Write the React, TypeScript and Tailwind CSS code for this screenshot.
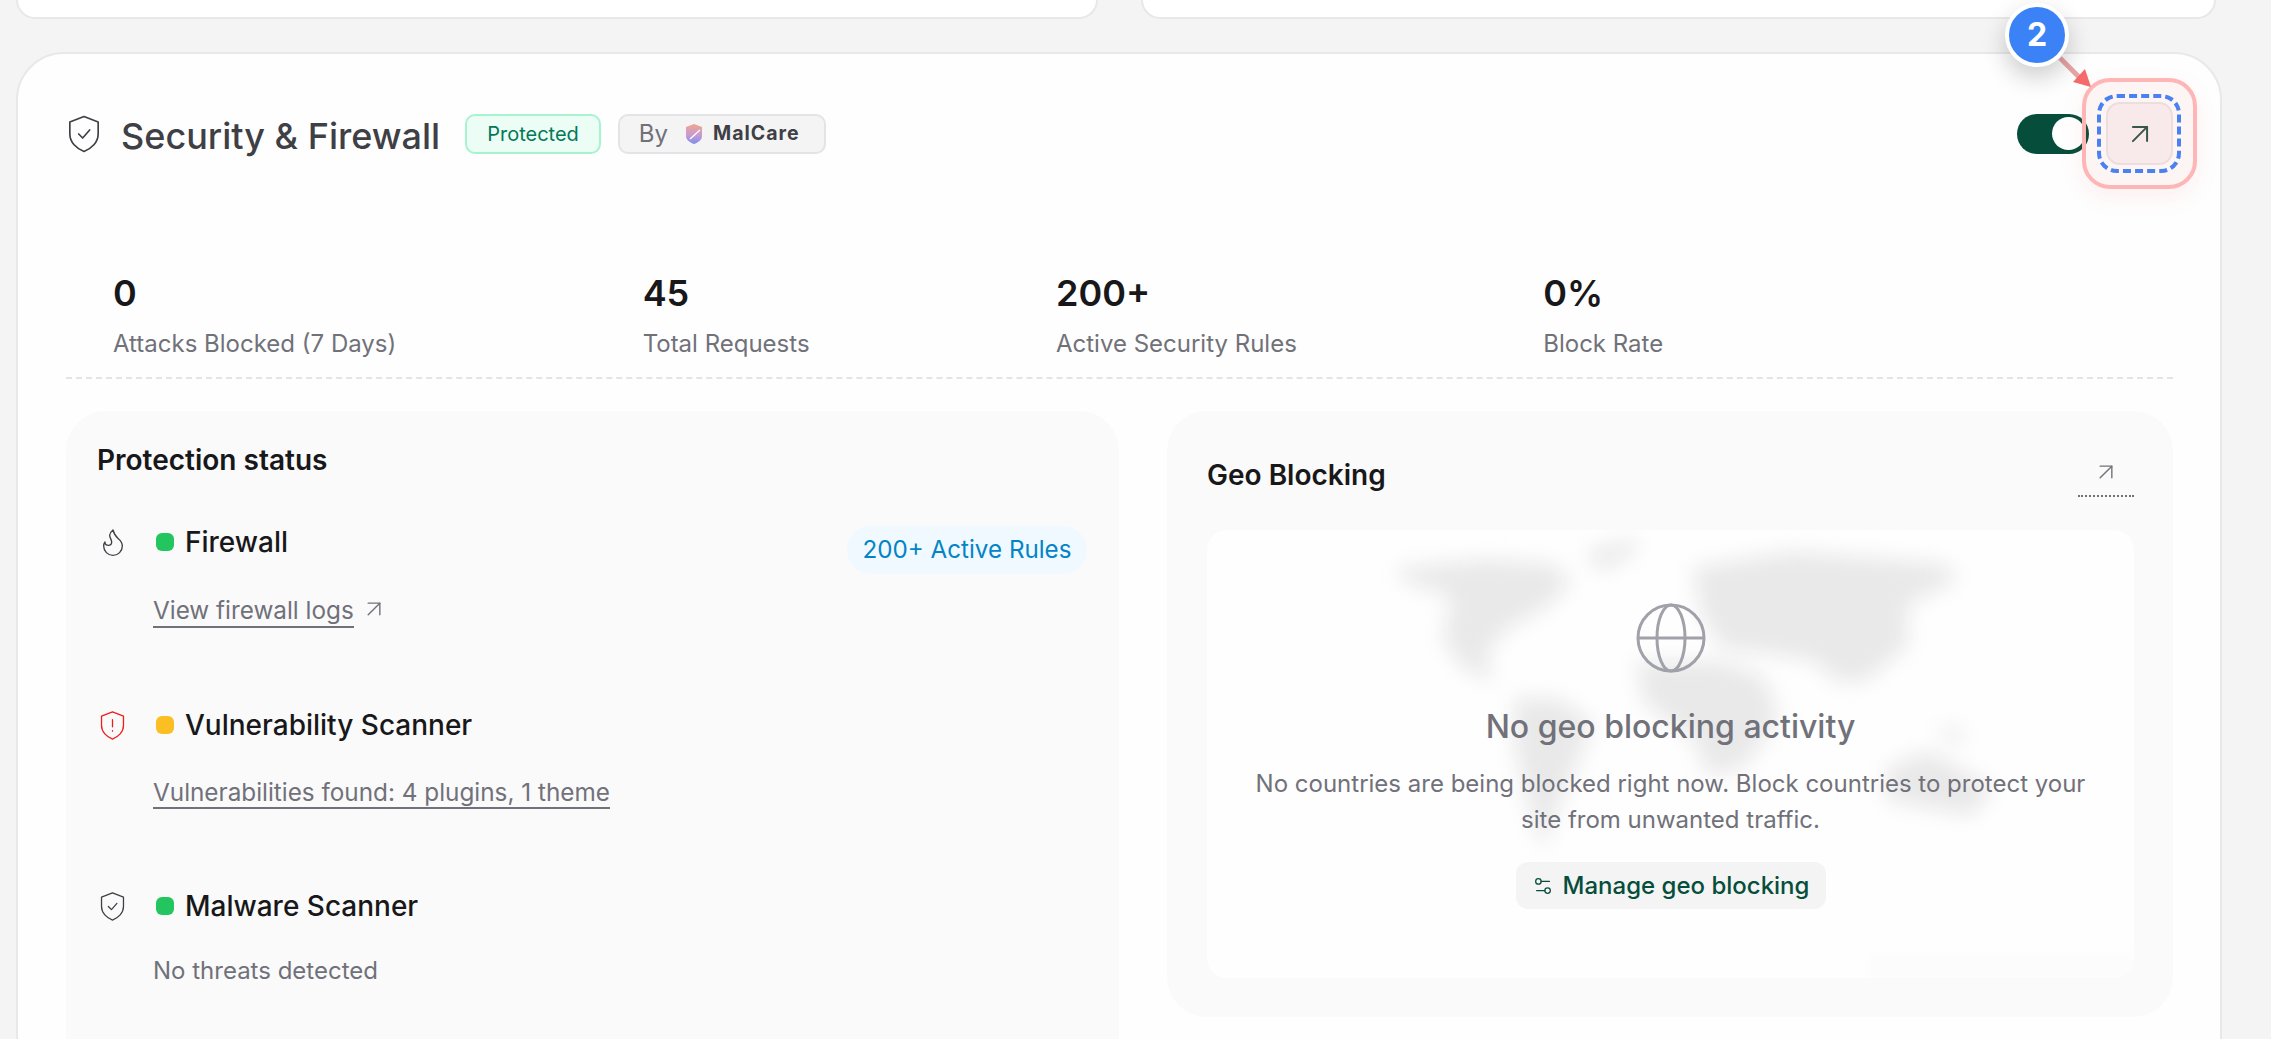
import { ArrowUpRight, Flame, Settings2 } from "lucide-react";

function ShieldIcon({ className, mark }: { className: string; mark: "check" | "alert" }) {
  return (
    <svg viewBox="0 0 24 24" fill="none" stroke="currentColor" strokeWidth="1" strokeLinejoin="round" strokeLinecap="round" className={className}>
      <path d="M12 1.5 L20.5 4.8 V12 C20.5 17 16.5 20.8 12 22.5 C7.5 20.8 3.5 17 3.5 12 V4.8 Z" />
      {mark === "check" ? <path d="M8.8 12 L11.2 14.4 L15.4 9.6" /> : <path d="M12 7.5 V13 M12 16 V16.4" />}
    </svg>
  );
}

function StatusRow({ icon, dot, title, children }: { icon: React.ReactNode; dot: string; title: string; children: React.ReactNode }) {
  return (
    <div className="flex">
      <div className="w-[56px] h-[44px] flex items-center pl-[5px] shrink-0">{icon}</div>
      <div>
        <div className="flex items-center gap-[11px] h-[44px] pl-[3px]">
          <span className={`w-[18px] h-[18px] rounded-[6px] ${dot}`} />
          <span className="text-[28px] font-medium text-[#18181b] leading-[44px]">{title}</span>
        </div>
        {children}
      </div>
    </div>
  );
}

function WorldMap() {
  const shapes = [
    "350,410 470,390 560,400 590,440 560,500 500,560 470,620 480,690 440,660 410,590 420,480 350,440",
    "610,370 680,340 680,370 630,420",
    "510,730 570,730 620,790 600,880 570,1000 550,1100 530,1000 510,850",
    "760,410 900,370 1110,400 1130,440 1060,500 1060,600 1000,690 960,690 930,640 860,620 800,610 770,520",
    "680,640 800,640 860,680 880,780 830,900 780,920 760,830 690,740",
    "1030,900 1090,860 1180,950 1150,1020 1090,1000 1030,980",
    "1100,800 1140,810 1130,850",
  ];
  return (
    <svg viewBox="330 330 880 780" preserveAspectRatio="none" className="absolute left-[179px] top-[5px] w-[629px] h-[318px] blur-[10px]">
      {shapes.map((points) => (
        <polygon key={points} points={points} fill="#e9e9e9" />
      ))}
    </svg>
  );
}

export default function App() {
  const stats = [
    { value: "0", label: "Attacks Blocked (7 Days)" },
    { value: "45", label: "Total Requests" },
    { value: "200+", label: "Active Security Rules" },
    { value: "0%", label: "Block Rate" },
  ];

  return (
    <div className="relative h-[1039px] overflow-hidden bg-[#f4f4f4] font-['Inter',sans-serif]">
      {/* Cards above, only their bottom edges show */}
      <div className="flex gap-[43px] pl-[16px] pr-[55px]">
        <div className="h-[19px] w-[1082px] bg-white border-2 border-t-0 border-[#e8e8e8] rounded-b-[48px]" />
        <div className="h-[19px] flex-1 bg-white border-2 border-t-0 border-[#e8e8e8] rounded-b-[48px]" />
      </div>

      <div className="ml-[16px] mr-[49px] mt-[33px] min-h-[1100px] bg-[#fefefe] border-2 border-[#e8e8e8] rounded-[48px] pl-[48px] pr-[47px] pt-[48px]">
        {/* Header */}
        <div className="flex items-center h-[63px]">
          <ShieldIcon mark="check" className="w-[40px] h-[40px] ml-[-2px] text-[#3f3f46]" />
          <h1 className="ml-[17px] mt-[5px] text-[36px] font-medium text-[#3f3f46] whitespace-nowrap">Security &amp; Firewall</h1>
          <span className="ml-[25px] h-[40px] px-[20px] flex items-center bg-[#ecfdf5] border-2 border-[#a7f3d0] rounded-[10px] text-[20px] text-[#047857]">
            Protected
          </span>
          <span className="ml-[17px] h-[40px] w-[208px] pl-[19px] flex items-center bg-[#f4f4f5] border-2 border-[#e4e4e7] rounded-[10px]">
            <span className="text-[24px] text-[#71717a]">By</span>
            <svg viewBox="0 0 18 20" className="w-[18px] h-[20px] ml-[17px]">
              <defs>
                <linearGradient id="malcare" x1="0" y1="0" x2="0" y2="1">
                  <stop offset="0" stopColor="#f0a58a" />
                  <stop offset="0.55" stopColor="#c79bd0" />
                  <stop offset="1" stopColor="#7f8cf0" />
                </linearGradient>
              </defs>
              <path d="M9 0 L17 3 V12 C17 16 13 18.5 9 20 C5 18.5 1 16 1 12 V3 Z" fill="url(#malcare)" />
              <path d="M5 15 L15 6" stroke="#fff" strokeWidth="1.3" />
            </svg>
            <span className="ml-[10px] text-[19.5px] font-bold tracking-[1px] text-[#3f3f46]">MalCare</span>
          </span>
          <div className="ml-auto w-[72px] h-[40px] rounded-full bg-[#064e3b] flex items-center justify-end pr-[4px]">
            <span className="w-[33px] h-[33px] rounded-full bg-white" />
          </div>
          <button className="ml-[17px] w-[67px] h-[63px] flex items-center justify-center bg-[#f9f4f4] border-2 border-[#eee6e6] rounded-[14px] text-[#2d5a47]">
            <ArrowUpRight size={34} strokeWidth={1.4} />
          </button>
        </div>

        {/* Stats */}
        <div className="flex gap-[246.4px] pl-[47px] pt-[108px] pb-[17px] border-b-2 border-dashed border-[#e4e4e7]">
          {stats.map((stat) => (
            <div key={stat.label}>
              <div className="text-[36px] leading-[40px] font-semibold text-[#18181b]">{stat.value}</div>
              <div className="mt-[15px] text-[24px] leading-[32px] text-[#71717a] whitespace-nowrap">{stat.label}</div>
            </div>
          ))}
        </div>

        <div className="flex gap-[48px] items-start mt-[32px]">
          {/* Protection status */}
          <div className="w-[1053px] min-h-[700px] bg-[#fafafa] rounded-[40px] pl-[31px] pr-[32px] pt-[30px]">
            <h2 className="text-[28px] leading-[38px] font-semibold text-[#18181b]">Protection status</h2>
            <div className="mt-[41px] flex justify-between">
              <StatusRow icon={<Flame size={32} strokeWidth={1} className="ml-[-5px] text-[#3f3f46]" />} dot="bg-[#22c55e]" title="Firewall">
                <div className="mt-[30px] flex items-start gap-[6px] h-[34px]">
                  <a className="text-[24.3px] leading-[32px] text-[#71717a] border-b-2 border-[#71717a] h-[34px]">View firewall logs</a>
                  <ArrowUpRight size={28} strokeWidth={1.2} className="text-[#71717a] mt-[1px]" />
                </div>
              </StatusRow>
              <span className="mt-[6px] h-[48px] px-[15.5px] flex items-center rounded-[24px] bg-[#f0f9ff] text-[24.2px] text-[#0284c7]">
                200+ Active Rules
              </span>
            </div>
            <div className="mt-[75px]">
              <StatusRow icon={<ShieldIcon mark="alert" className="w-[31px] h-[31px] ml-[-5px] text-[#ef1b1b]" />} dot="bg-[#fbbf24]" title="Vulnerability Scanner">
                <div className="mt-[29px] h-[33px]">
                  <a className="inline-block text-[24.3px] leading-[32px] text-[#71717a] border-b-2 border-[#71717a] h-[33px]">Vulnerabilities found: 4 plugins, 1 theme</a>
                </div>
              </StatusRow>
            </div>
            <div className="mt-[75px]">
              <StatusRow icon={<ShieldIcon mark="check" className="w-[31px] h-[31px] ml-[-5px] text-[#3f3f46]" />} dot="bg-[#22c55e]" title="Malware Scanner">
                <div className="mt-[27px] text-[24px] leading-[32px] text-[#71717a]">No threats detected</div>
              </StatusRow>
            </div>
          </div>

          {/* Geo blocking */}
          <div className="flex-1 h-[606px] bg-[#fafafa] rounded-[40px] pl-[40px] pr-[39px] pt-[40px]">
            <div className="flex justify-between h-[79px]">
              <h2 className="text-[28px] leading-[48px] font-semibold text-[#18181b]">Geo Blocking</h2>
              <div className="w-[56px] h-[46px] border-b-2 border-dotted border-[#71717a] flex justify-center pt-[7px]">
                <ArrowUpRight size={28} strokeWidth={1.2} className="text-[#71717a]" />
              </div>
            </div>
            <div className="relative h-[448px] bg-[#fefefe] rounded-[20px] overflow-hidden">
              <WorldMap />
              <div className="absolute right-0 bottom-0 w-[265px] h-[24px] bg-[#fcfcfc] blur-[2px]" />
              <div className="relative flex flex-col items-center pt-[73px]">
                <svg viewBox="0 0 70 70" fill="none" stroke="#a1a1aa" strokeWidth="3" className="w-[70px] h-[70px]">
                  <circle cx="35" cy="35" r="33" />
                  <ellipse cx="35" cy="35" rx="14" ry="33" />
                  <path d="M2 35 H68" />
                </svg>
                <h3 className="mt-[32px] text-[32px] leading-[44px] font-medium text-[#71717a]">No geo blocking activity</h3>
                <p className="mt-[17px] w-[860px] text-center text-[24px] leading-[36px] text-[#71717a]">
                  No countries are being blocked right now. Block countries to protect your site from unwanted traffic.
                </p>
                <button className="mt-[24px] h-[47px] w-[310px] flex items-center justify-center gap-[9px] rounded-[12px] bg-[#f4f4f5] text-[24px] font-medium text-[#064e3b]">
                  <Settings2 size={22} strokeWidth={1.4} />
                  Manage geo blocking
                </button>
              </div>
            </div>
          </div>
        </div>
      </div>

      {/* Step annotation over the open button */}
      <div className="absolute left-[2082px] top-[78px] w-[115px] h-[111px] rounded-[28px] border-4 border-[#fdb5b5] bg-[#ef4444]/5 shadow-[0_8px_24px_rgba(239,68,68,0.08)]" />
      <div className="absolute left-[2097px] top-[94px] w-[84px] h-[79px] rounded-[20px] border-4 border-dashed border-[#4a80f0]" />
      <svg viewBox="0 0 60 60" className="absolute left-[2050px] top-[50px] w-[60px] h-[60px]">
        <path d="M10 8 L30 28" stroke="#e8a5a5" strokeWidth="5" />
        <polygon points="41,37 23,32 35,19" fill="#f56b6b" />
      </svg>
      <div className="absolute left-[2005px] top-[3px] w-[64px] h-[64px] rounded-full border-4 border-white bg-[#3b82f6] shadow-[0_10px_24px_rgba(0,0,0,0.2)] flex items-center justify-center text-[32px] font-bold text-white">
        2
      </div>
    </div>
  );
}
